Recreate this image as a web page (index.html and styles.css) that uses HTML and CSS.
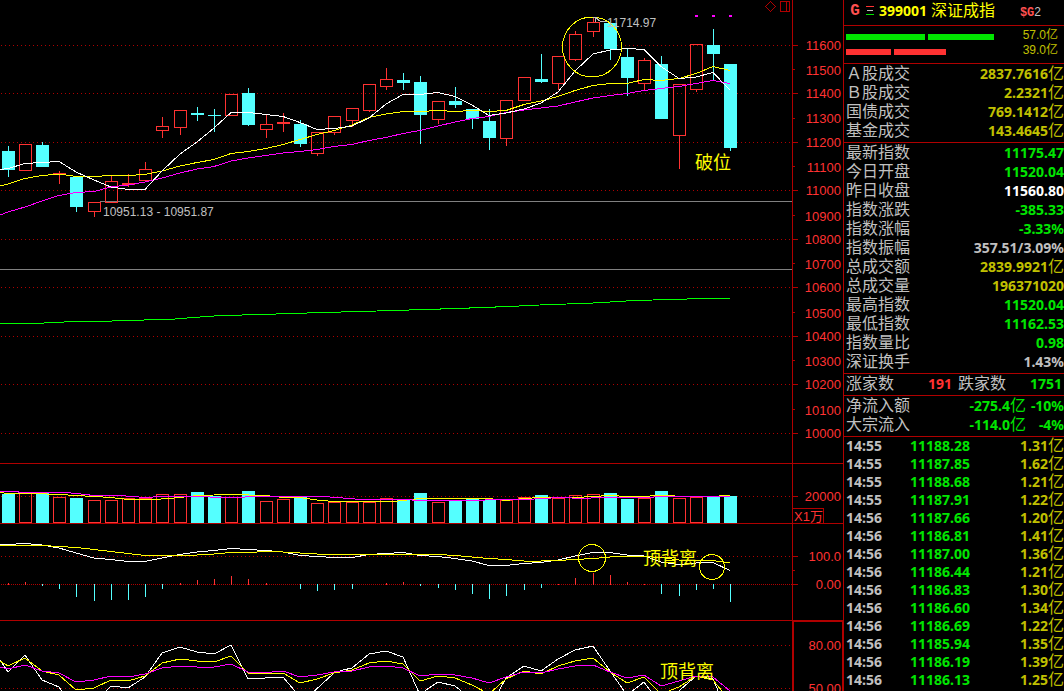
FILE: index.html
```html
<!DOCTYPE html>
<html lang="zh-CN">
<head>
<meta charset="utf-8">
<title>399001 深证成指</title>
<link rel="stylesheet" href="styles.css">
</head>
<body>
<div class="terminal">
  <main class="charts">
    <svg class="pane" id="price" viewBox="0 0 843 463" role="img" aria-label="K线图"></svg>
    <svg class="pane" id="volume" viewBox="0 463 843 60" role="img" aria-label="成交量"></svg>
    <svg class="pane" id="macd" viewBox="0 523 843 97" role="img" aria-label="MACD"></svg>
    <svg class="pane" id="kdj" viewBox="0 620 843 71" role="img" aria-label="KDJ"></svg>
  </main>
  <aside class="quote">
    <header class="head">
      <span class="mark">G</span>
      <svg class="menu" viewBox="0 0 8 12"><path d="M0 1.5h8" stroke="#ff3232"/><path d="M1 5.5h6" stroke="#c0c0c0"/><path d="M0 9.5h8" stroke="#00e600"/></svg>
      <span class="code">399001</span>
      <h1 class="name">深证成指</h1>
      <span class="tag"><b>$G</b>2</span>
    </header>
    <section class="flows">
      <div class="flow sell"><span class="track"><i class="bar big"></i><i class="bar mid"></i></span><span class="sum">57.0亿</span></div>
      <div class="flow buy"><span class="track"><i class="bar big"></i><i class="bar mid"></i></span><span class="sum">39.0亿</span></div>
    </section>
    <section class="block">
      <table class="rows" id="turnover"></table>
    </section>
    <section class="block">
      <table class="rows" id="stats"></table>
    </section>
    <section class="block breadth">
      <span class="label">涨家数</span><b class="up">191</b>
      <span class="label">跌家数</span><b class="down">1751</b>
    </section>
    <section class="block">
      <table class="rows netflow">
        <tr><th scope="row">净流入额</th><td class="down">-275.4<span class="unit">亿</span></td><td class="down pct">-10%</td></tr>
        <tr><th scope="row">大宗流入</th><td class="down">-114.0<span class="unit">亿</span></td><td class="down pct">-4%</td></tr>
      </table>
    </section>
    <section class="block deals">
      <table class="ticks" id="ticks"></table>
    </section>
  </aside>
</div>
<script src="app.js"></script>
</body>
</html>
```

FILE: styles.css
```css
* { box-sizing: border-box; }

body {
  margin: 0;
  background: #000;
  color: #c0c0c0;
  font-family: "Noto Sans", "Noto Sans CJK SC", sans-serif;
  font-size: 14px;
}

.terminal {
  display: grid;
  grid-template-columns: minmax(0, 1fr) 221px;
  min-height: 100vh;
}

/* charts */
.charts { min-width: 0; }
.pane { display: block; width: 100%; height: auto; }
.pane line, .pane rect, .pane polyline, .pane path { shape-rendering: crispEdges; }
.frame { stroke: #b00000; fill: none; }
.frame.thick { stroke-width: 2; }
.grid { stroke: #b00000; stroke-dasharray: 1 3; }
.grid.dense { stroke-dasharray: 1 1; }
.axis { fill: #ff3232; font: 13px "Liberation Sans", "Noto Sans CJK SC", sans-serif; }
.up-shape { stroke: #ff3232; fill: none; }
.down-shape { stroke: #54ffff; fill: #54ffff; }
.curve { fill: none; }
.white { stroke: #fff; }
.yellow { stroke: #ff0; }
.magenta { stroke: #f0f; }
.green { stroke: #0f0; }
.gray { stroke: #808080; }
.ring { fill: none; stroke: #ff0; shape-rendering: crispEdges; }
.dot { fill: #f0f; }
.value { fill: #c0c0c0; font: 12px "Liberation Sans", sans-serif; }
.note { fill: #ff0; font: 18px "Noto Sans CJK SC", sans-serif; }

/* quote panel */
.quote {
  border-left: 1px solid #b00000;
  overflow: hidden;
}

.head {
  display: flex;
  align-items: center;
  height: 25px;
  padding: 0 23px 4px 4px;
  color: #ff0;
}
.mark { width: 18px; text-align: center; padding-right: 4px; color: #ff5050; font: bold 16px "Liberation Mono", monospace; }
.menu { width: 8px; height: 12px; margin-right: 5px; shape-rendering: crispEdges; }
.code { font-weight: 700; }
.name { margin: 0 0 0 4px; font: 16px/20px "Liberation Sans", "Noto Sans CJK SC", sans-serif; }
.tag { margin-left: auto; padding-top: 4px; color: #c0c0c0; font: 12px "Liberation Sans", sans-serif; }
.tag b { color: #ff5050; font-family: "Liberation Mono", monospace; }

.flows {
  height: 38px;
  padding: 3px 6px 4px 2px;
  border-top: 1px solid #b00000;
}
.flow { display: flex; align-items: center; height: 15px; }
.track { display: flex; flex: 1; gap: 3px; }
.bar { height: 6px; }
.sell .bar { background: #00e600; }
.buy .bar { background: #ff3232; }
.sell .big { width: 79px; }
.sell .mid { width: 66px; }
.buy .big { width: 45px; }
.buy .mid { width: 52px; }
.sum { padding-bottom: 2px; color: #c0c000; font: 12px/13px "Liberation Sans", "Noto Sans CJK SC", sans-serif; }

.block { border-top: 1px solid #b00000; padding: 0 0 2px 2px; }
table { width: 100%; border-collapse: collapse; }
th, td { padding: 0; white-space: nowrap; }
.rows tr { height: 19px; }
.rows th, .label {
  text-align: left;
  white-space: nowrap;
  font: 16px/19px "Liberation Sans", "Noto Sans CJK SC", sans-serif;
}
.rows td, .ticks td {
  text-align: right;
  font-weight: 700;
  line-height: 18px;
}
.unit { font: 16px/1 "Liberation Sans", "Noto Sans CJK SC", sans-serif; }

.up { color: #ff3232; }
.down { color: #00e600; }
.flat { color: #fff; }
.money { color: #c0c000; }

.breadth {
  display: grid;
  grid-template-columns: 48px 58px 56px 1fr;
  padding: 0 2px 2px 2px;
}
.breadth b { line-height: 19px; text-align: right; }
.breadth .label:nth-of-type(2) { padding-left: 6px; }

.netflow { table-layout: fixed; }
.netflow th { width: 64px; }
.netflow .pct { width: 38px; }

.deals { padding: 0 0 0 2px; }
.ticks tr { height: 18px; }
.ticks td { line-height: 18px; height: 18px; }
.ticks .unit { line-height: 12px; }
.ticks td:first-child { width: 64px; text-align: left; }
.ticks td:nth-child(2) { text-align: left; }
```

FILE: app.js
```js
const NS = "http://www.w3.org/2000/svg";
const AXIS_X = 792;
const panes = {};
for (const id of ["price", "volume", "macd", "kdj"]) panes[id] = document.getElementById(id);

function add(pane, tag, attrs, text) {
  const el = document.createElementNS(NS, tag);
  for (const key in attrs) el.setAttribute(key, attrs[key]);
  if (text) el.textContent = text;
  panes[pane].appendChild(el);
}
const h = (pane, y, x1, x2, cls) => add(pane, "line", { x1, x2, y1: y + 0.5, y2: y + 0.5, class: cls });
const v = (pane, x, y1, y2, cls) => add(pane, "line", { x1: x + 0.5, x2: x + 0.5, y1, y2, class: cls });
const slots = [8,25,42,59,76,94,111,128,145,162,180,197,214,231,248,266,283,300,317,334,352,369,386,403,420,438,455,472,489,506,524,541,558,575,593,610,627,644,661,679,696,713,730];
const slotX = i => slots[i];
const label = (pane, y, text) => add(pane, "text", { x: 841, y: y + 4, "text-anchor": "end", class: "axis" }, text);
function curve(pane, cls, points) {
  add(pane, "polyline", { points, class: "curve " + cls });
}
/* one y value per candle slot, preceded by the value at the left edge */
function series(pane, cls, ys) {
  curve(pane, cls, ys.map((y, i) => (i ? slotX(i - 1) : 0) + "," + y).join(" "));
}
function box(pane, x, top, bottom, up) {
  if (up) {
    add(pane, "rect", { x: x - 5.5, y: top + 0.5, width: 12, height: Math.max(bottom - top - 1, 1), class: "up-shape" });
  } else {
    add(pane, "rect", { x: x - 6, y: top, width: 13, height: Math.max(bottom - top, 1), fill: "#54ffff" });
  }
}

/* price pane */
[45, 93, 142, 190, 239, 287, 336, 384, 433].forEach(y => {
  h("price", y, 1, AXIS_X, "grid");
  h("price", y, AXIS_X, 798, "frame");
});
[69, 118, 166, 215, 263, 312, 360, 409].forEach(y => h("price", y, AXIS_X, 795, "frame"));
[46, 71, 94, 119, 143, 168, 191, 217, 240, 265, 288, 314, 337, 362, 385, 411, 434]
  .forEach((y, i) => label("price", y, String(11600 - i * 100)));
h("price", 201, 100, AXIS_X, "gray");
h("price", 269, 0, AXIS_X, "gray");

/* open/close top, bottom, high, low, rising */
const candles = [
  [151,170,146,177,0],[144,171,144,171,1],[145,167,142,167,0],[173,175,171,184,1],[177,207,177,212,0],
  [202,212,202,217,1],[181,203,175,203,1],[183,185,174,187,1],[169,181,162,181,1],[126,131,117,138,1],
  [110,128,110,135,1],[113,115,107,121,0],[115,116,109,132,0],[94,116,94,116,1],[93,125,88,126,0],
  [124,130,115,138,1],[122,124,113,132,1],[124,144,120,147,0],[132,154,132,156,1],[116,133,116,135,1],
  [108,121,108,127,1],[84,111,84,112,1],[79,87,68,90,1],[80,83,73,90,0],[82,115,76,144,0],
  [101,120,101,124,1],[101,105,87,108,0],[109,119,109,129,0],[121,138,109,150,0],[100,139,100,146,1],
  [77,101,77,101,1],[79,82,54,83,0],[56,84,56,90,1],[34,60,31,61,1],[22,32,17,37,1],
  [23,49,23,60,0],[57,78,49,96,0],[60,84,58,90,1],[64,119,56,119,0],[84,136,84,169,1],
  [44,90,44,92,1],[45,54,29,81,0],[64,148,64,151,0]
];
candles.forEach(([top, bottom, high, low, up], i) => {
  const x = slotX(i);
  const cls = up ? "up-shape" : "down-shape";
  if (high < top) v("price", x, high, top, cls);
  if (low > bottom) v("price", x, bottom, low, cls);
  box("price", x, top, bottom, up);
});

curve("price", "green", "0,323.5 34,323.5 68,321.8 103,321.3 137,320.2 171,319.3 206,316.5 223,315.5 257,314.6 292,313.5 326,312.4 361,311.5 412,309.9 447,308.8 481,307.6 515,306.2 550,304.5 584,303.5 602,302.5 619,301.4 636,300.5 670,299.5 705,298.5 730,298.5");
series("price", "magenta", [215,212,207,201,195.5,192.5,191.5,187,185,182,178,173,169,166.5,161,158,155.5,153,151.5,149.5,146.5,144.5,140.5,137.5,133.5,130.5,126,122,118.5,116.5,112.5,110,108,106,102,98,95.5,93.5,90.5,88.5,86.5,83.5,80.5,83.5]);
series("price", "yellow", [186,184,178.5,175.5,174,176.5,176.5,175.5,175.5,174.5,171,166,162.5,159.5,153.5,151.5,148.5,144.5,139.5,134.5,130.5,125,117.5,114,111.5,111.5,110.5,111.5,110.5,111.5,110.5,104.5,101,96.5,90.5,85.5,83.5,83.5,79.5,80.5,78.5,73.5,66.5,70.5]);
series("price", "white", [169.5,168.5,163.5,162.5,161.5,172,180,187,189.5,189.5,171,154,142,128,112.5,112.5,114.5,116.5,122.5,129.5,128.5,126,118,104,94.5,94.5,92.5,96.5,105,115.5,113,109,103,92,71,54,50,48.5,49.5,66.5,78.5,77,72.5,90]);

add("price", "ellipse", { cx: 592, cy: 47, rx: 29.5, ry: 30, class: "ring" });
add("price", "path", { d: "M595.5 22v-5M593 17.5h4M596 18l4 3h7", class: "curve", stroke: "#c0c0c0" });
[695, 712, 729].forEach(x => add("price", "rect", { x, y: 15, width: 3, height: 2, class: "dot" }));
add("price", "text", { x: 607, y: 27, class: "value" }, "11714.97");
add("price", "text", { x: 103, y: 216, class: "value" }, "10951.13 - 10951.87");
add("price", "text", { x: 695, y: 169, class: "note" }, "破位");
add("price", "path", { d: "M770.5 1.5l5 5l-5 5l-5 -5zM780.5 1.5h9v10h-9zM786.5 1.5v10", class: "frame" });
v("price", AXIS_X, 0, 463, "frame");

/* volume pane */
h("volume", 463, 0, 843, "frame");
h("volume", 496, 1, AXIS_X, "grid");
h("volume", 496, AXIS_X, 798, "frame");
label("volume", 497, "20000");
const volumes = [494,493,493,497,498,500,500,498,498,494,494,492,496,497,491,501,499,497,503,502,502,502,498,500,493,502,500,498,500,500,497,495,498,495,494,493,499,498,491,498,497,496,496];
volumes.forEach((top, i) => box("volume", slotX(i), top, 523, candles[i][4]));
curve("volume", "yellow", "0,492.5 8,493.5 34,493.5 59,494.5 76,495.5 94,496.5 111,497.5 128,499.5 155,499.5 180,497.5 197,495.5 231,494.5 266,495.5 283,497.5 300,497.5 317,500 334,501.5 394,501.5 420,498.5 489,498.5 506,500.5 524,498.5 541,497.5 575,497.5 610,495.5 627,496.5 645,496.5 655,495.5 670,495.5 680,496.5 716,496.5 722,495.5 730,495.5");
curve("volume", "magenta", "0,491.5 17,491.5 20,492.5 65,492.5 76,493.5 94,495.5 120,495.5 145,497.5 162,496.5 205,496.5 215,497.5 240,497.5 250,496.5 324,496.5 343,498 361,499.5 410,499.5 415,500.5 480,500.5 490,499.5 525,499.5 560,497.5 583,498.5 600,497.5 652,497.5 656,496.5 730,496.5");
v("volume", AXIS_X, 463, 523, "frame");
add("volume", "rect", { x: 792.5, y: 508.5, width: 31, height: 16, class: "frame" });
add("volume", "text", { x: 794, y: 521, class: "axis" }, "X1万");

/* MACD pane */
h("macd", 523, 0, 843, "frame");
h("macd", 556, 1, AXIS_X, "grid");
h("macd", 584, 1, AXIS_X, "grid dense");
[556, 584].forEach(y => h("macd", y, AXIS_X, 798, "frame"));
h("macd", 570, AXIS_X, 795, "frame");
label("macd", 557, "100.0");
label("macd", 585, "0.00");
const histogram = [583,582,586,589,597,601,600,600,597,589,583,580,579,576,579,583,0,589,591,590,589,0,583,582,586,588,590,594,599,596,590,588,584,578,573,575,582,584,594,596,590,589,602];
histogram.forEach((y, i) => {
  if (!y) return;
  if (y <= 584) v("macd", slotX(i), y, 585, "up-shape");
  else v("macd", slotX(i), 584, y, "down-shape");
});
series("macd", "white", [544.5,544.5,543.5,545,548,553,558,559.5,561.5,561.5,558,554.5,552,550.5,548.5,549.5,550.5,552,555.5,556.5,557.5,557.5,554.5,553.5,552.5,555.5,556.5,558.5,561,565.5,565.5,563.5,562.5,560,556,552.5,552.5,555,556,562,564.5,563,562.5,570.5]);
series("macd", "yellow", [545.5,545.5,545.5,545.5,546.5,547.5,549.5,551.5,553.5,555.5,555.5,555.5,555,554,552.5,552.5,551.5,552,553,554,554.5,554.5,554.5,554.5,554.5,554.5,554.5,555.5,557,558.5,559.5,561,561,560.5,559.5,558.5,557,556.5,556.5,557.5,560,560.5,560.5,563]);
add("macd", "circle", { cx: 592, cy: 558, r: 13.5, class: "ring" });
add("macd", "circle", { cx: 712, cy: 567, r: 12.5, class: "ring" });
add("macd", "text", { x: 643, y: 565, class: "note" }, "顶背离");
v("macd", AXIS_X, 523, 620, "frame");

/* KDJ pane */
h("kdj", 620, 0, 843, "frame");
h("kdj", 645, 1, AXIS_X, "grid");
h("kdj", 688, 1, AXIS_X, "grid");
label("kdj", 646, "80.00");
label("kdj", 689, "50.00");
curve("kdj", "white", "0,660 8,672 25,655 42,680 59,687 70,702 95,702 111,686 128,688 145,677 162,653 180,647 197,652 214,654 231,645 248,679 283,677 300,697 310,695 334,673 343,670 352,668 369,654 386,651 403,657 420,695 426,690 438,682 455,686 475,702 494,700 506,678 524,666 541,671 558,659 575,650 593,646 610,671 627,695 644,682 661,705 680,690 696,676 713,679 722,700");
curve("kdj", "yellow", "0,661 8,666 25,658 42,671 59,675 76,690 94,688 111,680 128,681 145,676 162,663 180,659 197,661 214,662 231,656 248,673 283,673 300,683 317,679 334,673 352,670 369,663 386,661 403,664 420,681 438,676 455,678 472,685 489,694 506,679 524,671 541,674 558,666 575,661 593,658 610,672 627,683 644,677 661,694 679,687 696,676 713,680 726,696");
series("kdj", "magenta", [667,669,665,671,673,682,680,676,677,674,668,666,667,667,664,672,672.5,671,677,675,672,671,667,666,668,676,674,675,678,683,677,672,673,669,666,665,672,678,675,686,681,676,677,691]);
add("kdj", "text", { x: 660, y: 678, class: "note" }, "顶背离");
v("kdj", AXIS_X, 620, 691, "frame");
add("kdj", "path", { d: "M793.5 700V621.5H842.5V700", class: "frame" });

/* quote tables */
function fill(id, rows, build) {
  document.getElementById(id).innerHTML = "<tbody>" + rows.map(build).join("") + "</tbody>";
}
const money = text => text.replace("亿", '<span class="unit">亿</span>');
const row = ([name, value, cls]) => `<tr><th scope="row">${name}</th><td class="${cls}">${money(value)}</td></tr>`;
fill("turnover", [
  ["Ａ股成交", "2837.7616亿", "money"], ["Ｂ股成交", "2.2321亿", "money"],
  ["国债成交", "769.1412亿", "money"], ["基金成交", "143.4645亿", "money"]
], row);
fill("stats", [
  ["最新指数", "11175.47", "down"], ["今日开盘", "11520.04", "down"], ["昨日收盘", "11560.80", "flat"],
  ["指数涨跌", "-385.33", "down"], ["指数涨幅", "-3.33%", "down"], ["指数振幅", "357.51/3.09%", ""],
  ["总成交额", "2839.9921亿", "money"], ["总成交量", "196371020", "money"], ["最高指数", "11520.04", "down"],
  ["最低指数", "11162.53", "down"], ["指数量比", "0.98", "down"], ["深证换手", "1.43%", ""]
], row);
fill("ticks", [
  ["14:55", "11188.28", "1.31亿"], ["14:55", "11187.85", "1.62亿"], ["14:55", "11188.68", "1.21亿"],
  ["14:55", "11187.91", "1.22亿"], ["14:56", "11187.66", "1.20亿"], ["14:56", "11186.81", "1.41亿"],
  ["14:56", "11187.00", "1.36亿"], ["14:56", "11186.44", "1.21亿"], ["14:56", "11186.83", "1.30亿"],
  ["14:56", "11186.60", "1.34亿"], ["14:56", "11186.69", "1.22亿"], ["14:56", "11185.94", "1.35亿"],
  ["14:56", "11186.19", "1.39亿"], ["14:56", "11186.13", "1.25亿"]
], ([time, price, amount]) => `<tr><td>${time}</td><td class="down">${price}</td><td class="money">${money(amount)}</td></tr>`);
```
